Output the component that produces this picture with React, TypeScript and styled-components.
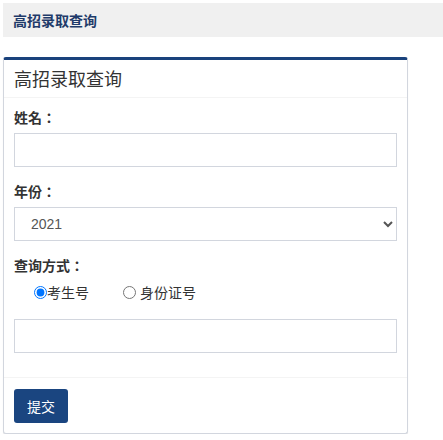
import React from 'react'
import styled, {createGlobalStyle} from 'styled-components'

const GlobalStyle = createGlobalStyle`
  html, body {
    margin: 0;
    padding: 0;
    background: #fff;
  }
  body {
    font-family: "Liberation Sans", "Noto Sans CJK SC", sans-serif;
    font-size: 14px;
    color: #333;
  }
  * {
    box-sizing: border-box;
  }
`

const Page = styled.div`
  padding: 3px 0 0 3px;
`

const TopBar = styled.div`
  height: 34px;
  background: #f0f0f0;
  display: flex;
  align-items: center;
  padding-left: 10px;
  font-size: 14px;
  font-weight: bold;
  color: #1f3b6a;
`

const Box = styled.div`
  width: 405px;
  margin-top: 20px;
  background: #fff;
  border: 1px solid #d2d6de;
  border-top: 3px solid #1a427c;
  border-radius: 3px;
  box-shadow: 0 1px 1px rgba(0, 0, 0, 0.1);
`

const BoxHeader = styled.div`
  height: 38px;
  display: flex;
  align-items: center;
  padding: 0 10px 2px;
  font-size: 18px;
  color: #333;
  border-bottom: 1px solid #f4f4f4;
`

const BoxBody = styled.div`
  padding: 10px 10px 9px;
`

const FormGroup = styled.div`
  margin-bottom: 15px;
`

// the full-width colon sits centred in the reference, as in the JP/TC cuts
const Label = styled.label`
  display: block;
  height: 20px;
  line-height: 20px;
  margin-bottom: 5px;
  font-family: "Liberation Sans", "Noto Sans CJK JP", sans-serif;
  font-weight: bold;
  font-size: 14px;
`

const Input = styled.input`
  display: block;
  width: 100%;
  height: 34px;
  border: 1px solid #d2d6de;
  border-radius: 0;
  padding: 6px 12px;
  font-family: inherit;
  font-size: 14px;
  color: #555;
  outline: none;
`

const Select = styled.select`
  display: block;
  width: 100%;
  height: 34px;
  border: 1px solid #d2d6de;
  border-radius: 0;
  padding: 6px 12px;
  font-family: inherit;
  font-size: 14px;
  color: #555;
  background: #fff;
  outline: none;
`

const RadioRow = styled.div`
  display: flex;
  align-items: center;
  height: 22px;
  margin-bottom: 16px;
  padding-left: 20px;
`

const RadioItem = styled.label<{$gap: number; $lead: number}>`
  display: inline-flex;
  align-items: center;
  margin-left: ${p => p.$lead}px;
  font-size: 14px;
  color: #333;

  input {
    margin: 0 ${p => p.$gap}px 0 0;
    width: 13px;
    height: 13px;
  }
`

const BoxFooter = styled.div`
  padding: 11px 10px 10px;
  border-top: 1px solid #f4f4f4;
`

const Button = styled.button`
  height: 34px;
  padding: 0 13px;
  border: none;
  border-radius: 3px;
  background: #1a4580;
  color: #fff;
  font-family: inherit;
  font-size: 14px;
  cursor: pointer;
`

const App = () => (
  <Page>
    <GlobalStyle/>
    <TopBar>高招录取查询</TopBar>
    <Box>
      <BoxHeader>高招录取查询</BoxHeader>
      <BoxBody>
        <FormGroup>
          <Label>姓名：</Label>
          <Input type="text"/>
        </FormGroup>
        <FormGroup>
          <Label>年份：</Label>
          <Select defaultValue="2021">
            <option value="2021">2021</option>
            <option value="2020">2020</option>
          </Select>
        </FormGroup>
        <FormGroup>
          <Label>查询方式：</Label>
          <RadioRow>
            <RadioItem $gap={0} $lead={0}>
              <input type="radio" name="mode" defaultChecked/>考生号
            </RadioItem>
            <RadioItem $gap={4} $lead={34}>
              <input type="radio" name="mode"/>身份证号
            </RadioItem>
          </RadioRow>
          <Input type="text"/>
        </FormGroup>
      </BoxBody>
      <BoxFooter>
        <Button type="button">提交</Button>
      </BoxFooter>
    </Box>
  </Page>
)

export default App
